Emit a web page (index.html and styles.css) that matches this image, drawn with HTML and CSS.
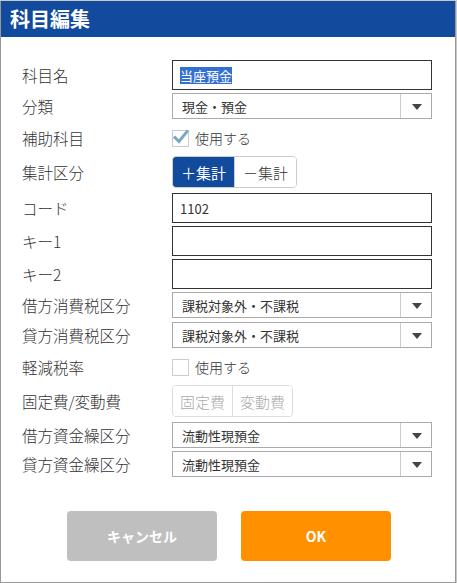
FILE: index.html
```html
<!DOCTYPE html>
<html lang="ja">
<head>
  <meta charset="UTF-8" />
  <title>科目編集</title>
  <link rel="stylesheet" href="styles.css">
</head>
<body>
  <div class="dialog">
    <header class="dialog-head">科目編集</header>

    <form class="form">
      <div class="row row-input first">
        <label class="label">科目名</label>
        <div class="field input"><span class="selected">当座預金</span></div>
      </div>

      <div class="row row-select">
        <label class="label">分類</label>
        <div class="field select">
          <span class="select-text">現金・預金</span>
          <span class="select-arrow"></span>
        </div>
      </div>

      <div class="row row-check gap-l">
        <label class="label">補助科目</label>
        <div class="check-wrap">
          <span class="checkbox checked">
            <svg viewBox="0 0 18 18" width="18" height="18"><path d="M3 9.5 L7 13.5 L15 3.5" fill="none" stroke="#7ba7bf" stroke-width="3" stroke-linecap="square"/></svg>
          </span>
          <span class="check-text">使用する</span>
        </div>
      </div>

      <div class="row row-input gap-l">
        <label class="label">集計区分</label>
        <div class="toggle">
          <span class="toggle-item active">＋集計</span>
          <span class="toggle-item">－集計</span>
        </div>
      </div>

      <div class="row row-input gap-m">
        <label class="label">コード</label>
        <div class="field input">1102</div>
      </div>

      <div class="row row-input">
        <label class="label">キー1</label>
        <div class="field input"></div>
      </div>

      <div class="row row-input">
        <label class="label">キー2</label>
        <div class="field input"></div>
      </div>

      <div class="row row-select">
        <label class="label">借方消費税区分</label>
        <div class="field select">
          <span class="select-text">課税対象外・不課税</span>
          <span class="select-arrow"></span>
        </div>
      </div>

      <div class="row row-select gap-s">
        <label class="label">貸方消費税区分</label>
        <div class="field select">
          <span class="select-text">課税対象外・不課税</span>
          <span class="select-arrow"></span>
        </div>
      </div>

      <div class="row row-check gap-l">
        <label class="label">軽減税率</label>
        <div class="check-wrap">
          <span class="checkbox"></span>
          <span class="check-text">使用する</span>
        </div>
      </div>

      <div class="row row-input gap-l">
        <label class="label">固定費/変動費</label>
        <div class="toggle disabled">
          <span class="toggle-item">固定費</span>
          <span class="toggle-item">変動費</span>
        </div>
      </div>

      <div class="row row-select gap-m">
        <label class="label">借方資金繰区分</label>
        <div class="field select">
          <span class="select-text">流動性現預金</span>
          <span class="select-arrow"></span>
        </div>
      </div>

      <div class="row row-select">
        <label class="label">貸方資金繰区分</label>
        <div class="field select">
          <span class="select-text">流動性現預金</span>
          <span class="select-arrow"></span>
        </div>
      </div>
    </form>

    <div class="actions">
      <button class="btn btn-cancel" type="button">キャンセル</button>
      <button class="btn btn-ok" type="button">OK</button>
    </div>
  </div>
</body>
</html>
```

FILE: styles.css
```css
body {
  margin: 0;
  background: #c8c8c8;
  font-family: "Noto Sans CJK JP", "Noto Sans", sans-serif;
  color: #333;
}

.dialog {
  box-sizing: border-box;
  width: 456px;
  height: 582px;
  margin-top: 1px;
  background: #fff;
  border: 1px solid #999;
  border-top: none;
}

.dialog-head {
  height: 36px;
  background: #124a9e;
  color: #fff;
  font-size: 20px;
  font-weight: 700;
  line-height: 36px;
  padding-left: 9px;
}

.form {
  padding: 0 23px 0 21px;
}

.row {
  display: flex;
  align-items: center;
  margin-top: 3px;
}
.row.first { margin-top: 23px; }
.row.gap-s { margin-top: 4px; }
.row.gap-m { margin-top: 6px; }
.row.gap-l { margin-top: 9px; }

.row-input { height: 30px; }
.row-select { height: 26px; }
.row-check { height: 20px; }

.label {
  width: 150px;
  flex: none;
  font-size: 15.5px;
  font-weight: 300;
  color: #333;
}

.field {
  box-sizing: border-box;
  width: 260px;
  height: 100%;
  font-size: 13px;
  color: #333;
  display: flex;
  align-items: center;
}

.input {
  border: 1px solid #333;
  padding-left: 7px;
}

.selected {
  background: #3470d2;
  color: #fff;
  line-height: 17px;
}

.select {
  border: 1px solid #aaa;
  padding-left: 9px;
}
.select-text {
  flex: 1;
}
.select-arrow {
  width: 30px;
  height: 100%;
  border-left: 1px solid #ccc;
  position: relative;
}
.select-arrow::after {
  content: "";
  position: absolute;
  left: 11px;
  top: 10px;
  border-left: 5px solid transparent;
  border-right: 5px solid transparent;
  border-top: 6px solid #444;
}

.check-wrap {
  display: flex;
  align-items: center;
  gap: 6px;
  font-size: 14px;
  font-weight: 300;
}
.checkbox {
  box-sizing: border-box;
  width: 17px;
  height: 17px;
  border: 1px solid #ccc;
  background: #fff;
  display: flex;
  align-items: center;
  justify-content: center;
}
.checkbox svg {
  flex: none;
  margin-top: -2px;
}

.toggle {
  display: flex;
  height: 100%;
  border: 1px solid #ccc;
  border-radius: 4px;
  overflow: hidden;
  font-size: 15px;
  font-weight: 300;
}
.toggle-item {
  display: flex;
  align-items: center;
  padding: 0 8px;
  color: #333;
  background: #fff;
}
.toggle-item + .toggle-item {
  border-left: 1px solid #ccc;
}
.toggle-item.active {
  background: #124a9e;
  color: #fff;
  font-weight: 400;
}
.toggle.disabled {
  border-color: #ddd;
}
.toggle.disabled .toggle-item {
  color: #aaa;
  padding: 0 7px;
}
.toggle.disabled .toggle-item + .toggle-item {
  border-left-color: #ddd;
}

.actions {
  display: flex;
  justify-content: center;
  gap: 24px;
  margin-top: 34px;
  padding-left: 2px;
}

.btn {
  width: 150px;
  height: 50px;
  border: none;
  border-radius: 4px;
  color: #fff;
  font-family: inherit;
  font-size: 14px;
  font-weight: 700;
}
.btn-cancel { background: #bfbfbf; }
.btn-ok { background: #ff9100; }
```
